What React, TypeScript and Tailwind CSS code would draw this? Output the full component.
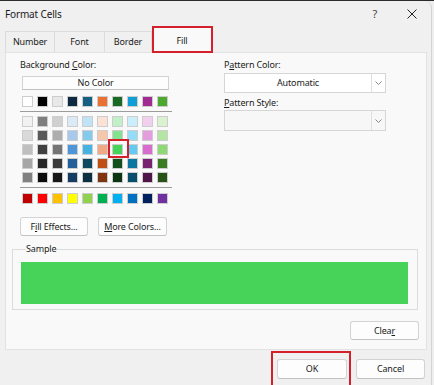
import React from "react";

const themeRow = ["#FFFFFF", "#000000", "#E8E8E8", "#0E2841", "#156082", "#E97132", "#196B24", "#0F9ED5", "#A02B93", "#4EA72E"];
const gridCols = [
  ["#F2F2F2", "#D9D9D9", "#BFBFBF", "#A6A6A6", "#808080"],
  ["#7F7F7F", "#595959", "#404040", "#262626", "#0D0D0D"],
  ["#D0D0D0", "#ADADAD", "#747474", "#3A3A3A", "#171717"],
  ["#DCEAF7", "#A6C9EC", "#4E95D9", "#215F9A", "#153D64"],
  ["#C0E4F5", "#83CAEB", "#44B3E1", "#0F4761", "#0B3041"],
  ["#FBE2D5", "#F7C7AC", "#F1A983", "#C04F15", "#80350E"],
  ["#C1F0C8", "#83E28E", "#47D359", "#124F1A", "#0C3511"],
  ["#CAEEFB", "#95DCF7", "#61CBF3", "#0B76A0", "#074F6A"],
  ["#F2CEEF", "#E59EDD", "#D86DCD", "#782170", "#501549"],
  ["#DAF2D0", "#B4E5A2", "#8ED973", "#3A7C22", "#275317"],
];
const stdRow = ["#C00000", "#FF0000", "#FFC000", "#FFFF00", "#92D050", "#00B050", "#00B0F0", "#0070C0", "#002060", "#7030A0"];

function Swatch({ c, selected }: { c: string; selected?: boolean }) {
  return (
    <div className="relative w-[11px] h-[11px]">
      <div className="w-[11px] h-[11px] border border-[#cdcdcd]" style={{ backgroundColor: c }} />
      {selected && <div className="absolute z-10 -left-[4px] -top-[5px] w-[21px] h-[19px] border-2 border-[#d3202b]" />}
    </div>
  );
}

function Btn({ children, className = "" }: { children: React.ReactNode; className?: string }) {
  return (
    <div className={`flex items-center justify-center bg-[#fdfdfd] border border-[#d3d3d3] border-b-[#c2c2c2] rounded-[3px] ${className}`}>
      {children}
    </div>
  );
}

function Chevron() {
  return (
    <svg width="7" height="4" viewBox="0 0 7 4" fill="none">
      <path d="M0.5 0.5 L3.5 3.5 L6.5 0.5" stroke="#7a7a7a" strokeWidth="0.9" />
    </svg>
  );
}

function Combo({ text, bg }: { text?: string; bg: string }) {
  return (
    <div className={`flex w-[162px] border border-[#d6d6d6] ${bg}`}>
      <div className="flex-1 flex items-center justify-center">{text}</div>
      <div className="w-[14px] flex items-center justify-center border-l border-[#e0e0e0]">
        <Chevron />
      </div>
    </div>
  );
}

export default function App() {
  return (
    <div className="w-[434px] h-[385px] bg-[#eeeeee] overflow-hidden font-['Noto_Sans',sans-serif] text-[9px] leading-[12px] tracking-[-0.15px] text-[#1b1b1b]">
      <div className="h-[1px] bg-[#2b2b2b]" />
      <div className="w-[432px] h-[384px] bg-[#f0f0f0] border-r border-[#d4d4d4] rounded-tr-[7px] flex flex-col">
        {/* Title bar */}
        <div className="h-[26px] flex items-center pl-[5px] pr-[14px]">
          <span className="text-[10px] flex-1">Format Cells</span>
          <span className="text-[11px] text-[#444] mr-[30px]">?</span>
          <svg width="10" height="10" viewBox="0 0 10 10">
            <path d="M0.5 0.5 L9.5 9.5 M9.5 0.5 L0.5 9.5" stroke="#222" strokeWidth="1" />
          </svg>
        </div>
        {/* Tabs */}
        <div className="h-[25px] flex items-end pl-[5px]">
          <div className="w-[49px] h-[21px] flex items-center justify-center border-t border-l border-[#dcdcdc] bg-[#f0f0f0]">Number</div>
          <div className="w-[50px] h-[21px] flex items-center justify-center border-t border-l border-[#dcdcdc] bg-[#f0f0f0]">Font</div>
          <div className="w-[48px] h-[21px] flex items-center justify-center border-t border-l border-r border-[#dcdcdc] bg-[#f0f0f0]">Border</div>
          <div className="relative w-[60px] h-[25px] flex items-end justify-center pb-[5px] bg-[#f9f9f9]">
            Fill
            <div className="absolute -top-[1px] -bottom-[1px] left-0 right-[-1px] border-2 border-[#d3202b]" />
          </div>
        </div>
        {/* Panel */}
        <div className="ml-[5px] w-[422px] h-[298px] bg-[#f9f9f9] border border-[#e2e2e2] flex flex-col">
          <div className="flex">
            {/* left */}
            <div className="pl-[14px] pt-[6px] flex flex-col">
              <div>
                Background <u>C</u>olor:
              </div>
              <Btn className="ml-[2px] mt-[5px] w-[147px] h-[14px] rounded-none border-[#cfcfcf]">No Color</Btn>
              <div className="ml-[2px] mt-[6px] flex gap-[4px]">
                {themeRow.map((c, i) => (
                  <Swatch key={i} c={c} />
                ))}
              </div>
              <div className="mt-[4px] w-[152px] h-[1px] bg-[#9c9c9c]" />
              <div className="ml-[2px] mt-[4px] flex gap-[4px]">
                {gridCols.map((col, ci) => (
                  <div key={ci} className="flex flex-col gap-[3px]">
                    {col.map((c, ri) => (
                      <Swatch key={ri} c={c} selected={ci === 6 && ri === 2} />
                    ))}
                  </div>
                ))}
              </div>
              <div className="mt-[4px] w-[152px] h-[1px] bg-[#9c9c9c]" />
              <div className="ml-[2px] mt-[5px] flex gap-[4px]">
                {stdRow.map((c, i) => (
                  <Swatch key={i} c={c} />
                ))}
              </div>
              <div className="mt-[13px] flex gap-[10px]">
                <Btn className="w-[68px] h-[19px]">
                  F<u>i</u>ll Effects...
                </Btn>
                <Btn className="w-[69px] h-[19px]">
                  <u>M</u>ore Colors...
                </Btn>
              </div>
            </div>
            {/* right */}
            <div className="ml-[52px] pt-[6px] flex flex-col">
              <div>
                P<u>a</u>ttern Color:
              </div>
              <div className="mt-[2px] h-[20px] flex">
                <Combo text="Automatic" bg="bg-white" />
              </div>
              <div className="mt-[4px]">
                <u>P</u>attern Style:
              </div>
              <div className="mt-[1px] h-[21px] flex">
                <Combo bg="bg-[#f7f7f7]" />
              </div>
            </div>
          </div>
          {/* Sample */}
          <fieldset className="ml-[6px] mt-[7px] w-[406px] border border-[#dcdcdc] pl-[8px] pb-[5px]">
            <legend className="ml-[5px] px-0">Sample</legend>
            <div className="mt-[7px] w-[387px] h-[42px] bg-[#47D359]" />
          </fieldset>
          <div className="mt-[11px] flex justify-end pr-[7px]">
            <Btn className="w-[69px] h-[19px]">
              Clea<u>r</u>
            </Btn>
          </div>
        </div>
        {/* Bottom buttons */}
        <div className="mt-[9px] flex justify-end pr-[6px] gap-[9px]">
          <div className="relative">
            <Btn className="w-[70px] h-[20px] border-[#51698a] border-b-[#51698a]">OK</Btn>
            <div className="absolute -left-[6px] -top-[8px] -right-[4px] -bottom-[8px] border-2 border-[#d3202b]" />
          </div>
          <Btn className="w-[69px] h-[20px]">Cancel</Btn>
        </div>
      </div>
    </div>
  );
}
